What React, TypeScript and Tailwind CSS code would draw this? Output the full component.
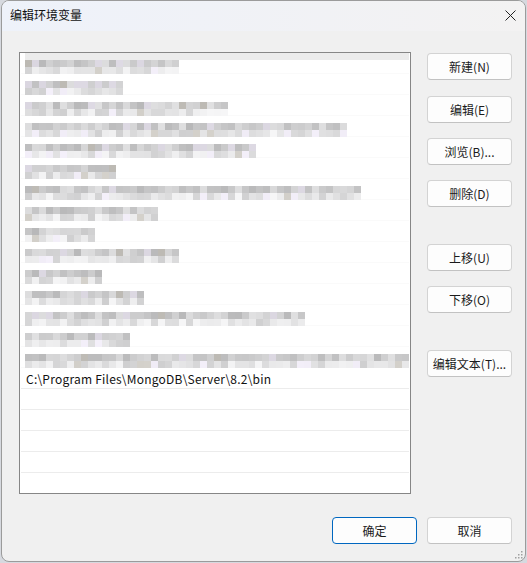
import React from 'react';

// right edge (px, page coords) of each blurred path entry
const blurredRows = [178, 122, 226, 346, 256, 115, 360, 157, 95, 178, 96, 143, 304, 129, 408];

const shade = (row: number, col: number, line: number) => {
  let x = Math.sin(row * 97.13 + col * 12.9898 + line * 78.233) * 43758.5453;
  x = x - Math.floor(x);
  const base = line === 0 ? 182 : 204;
  const v = Math.round(base + x * 46);
  if (x > 0.92) return `rgb(${v - 6},${v - 10},${v})`;
  if (x < 0.05) return `rgb(${v + 6},${v + 3},${v - 3})`;
  return `rgb(${v},${v},${v + 1})`;
};

const Mosaic: React.FC<{ row: number; end: number }> = ({ row, end }) => {
  const cols = Math.ceil((end - 25) / 7);
  return (
    <div className="flex flex-col">
      {[0, 1].map((line) => (
        <div key={line} className="flex">
          {Array.from({ length: cols }).map((_, c) => (
            <div key={c} className="w-[7px] h-[7px]" style={{ backgroundColor: shade(row, c, line) }} />
          ))}
        </div>
      ))}
    </div>
  );
};

const Btn: React.FC<{ children: React.ReactNode; primary?: boolean; className?: string }> = ({
  children,
  primary,
  className = '',
}) => (
  <div
    className={`w-[85px] h-[27px] flex items-center justify-center rounded-[4px] bg-[#fdfdfd] text-[12px] text-[#1b1b1b] ${
      primary ? 'border border-[#0067c0]' : 'border border-[#d3d3d3] border-b-[#c2c2c2]'
    } ${className}`}
  >
    {children}
  </div>
);

export default function App() {
  return (
    <div className="w-[527px] h-[563px] bg-[#d6d9df] font-['Noto_Sans_CJK_SC','Noto_Sans',sans-serif]">
      <div className="ml-px w-[525px] h-[562px] rounded-[8px] border border-[#9b9b9b] overflow-hidden flex flex-col bg-[#f0f0f0]">
        {/* Title bar */}
        <div className="h-[30px] flex items-center justify-between bg-gradient-to-r from-[#eef2fa] to-[#f3f2f2] pl-[8px] pr-[9px]">
          <span className="text-[12px] text-[#111] pb-[2px]">编辑环境变量</span>
          <svg width="11" height="11" viewBox="0 0 11 11" className="mb-[1px]">
            <path d="M0.5 0.5 L10.5 10.5 M10.5 0.5 L0.5 10.5" stroke="#222" strokeWidth="1" />
          </svg>
        </div>

        {/* Body */}
        <div className="relative flex-1 flex flex-col pl-[17px] pt-[21px] pr-[13px]">
          <div className="flex">
            {/* List */}
            <div className="w-[392px] h-[442px] border border-[#868686] bg-white overflow-hidden">
              {blurredRows.map((end, i) => (
                <div key={i} className="relative h-[21px] mx-px border-b border-[#fafafa] pl-[4px] pt-[7px]">
                  {i === 0 && <div className="absolute left-[4px] right-0 top-0 h-[7px] bg-[#ebebeb]" />}
                  <Mosaic row={i} end={end} />
                </div>
              ))}
              <div className="h-[21px] mx-px border-b border-[#ececec] pl-[5px] flex items-center text-[12px] tracking-[0.22px] text-[#111] leading-none pt-[1px]">
                C:\Program Files\MongoDB\Server\8.2\bin
              </div>
              {[0, 1, 2, 3].map((i) => (
                <div key={i} className="h-[21px] mx-px border-b border-[#ececec]" />
              ))}
            </div>

            {/* Side buttons */}
            <div className="ml-[16px] mt-px flex flex-col">
              <Btn>新建(N)</Btn>
              <Btn className="mt-[16px]">编辑(E)</Btn>
              <Btn className="mt-[15px]">浏览(B)...</Btn>
              <Btn className="mt-[15px]">删除(D)</Btn>
              <Btn className="mt-[37px]">上移(U)</Btn>
              <Btn className="mt-[15px]">下移(O)</Btn>
              <Btn className="mt-[37px]">编辑文本(T)...</Btn>
            </div>
          </div>

          {/* Footer */}
          <div className="mt-[23px] flex justify-end gap-[10px]">
            <Btn primary>确定</Btn>
            <Btn>取消</Btn>
          </div>

          {/* Resize grip */}
          <svg width="8" height="8" viewBox="0 0 8 8" className="absolute right-[2px] bottom-[2px]">
            <rect x="6" y="0" width="1.5" height="1.5" fill="#a0a0a0" />
            <rect x="3" y="3" width="1.5" height="1.5" fill="#a0a0a0" />
            <rect x="6" y="3" width="1.5" height="1.5" fill="#a0a0a0" />
            <rect x="0" y="6" width="1.5" height="1.5" fill="#a0a0a0" />
            <rect x="3" y="6" width="1.5" height="1.5" fill="#a0a0a0" />
            <rect x="6" y="6" width="1.5" height="1.5" fill="#a0a0a0" />
          </svg>
        </div>
      </div>
    </div>
  );
}
